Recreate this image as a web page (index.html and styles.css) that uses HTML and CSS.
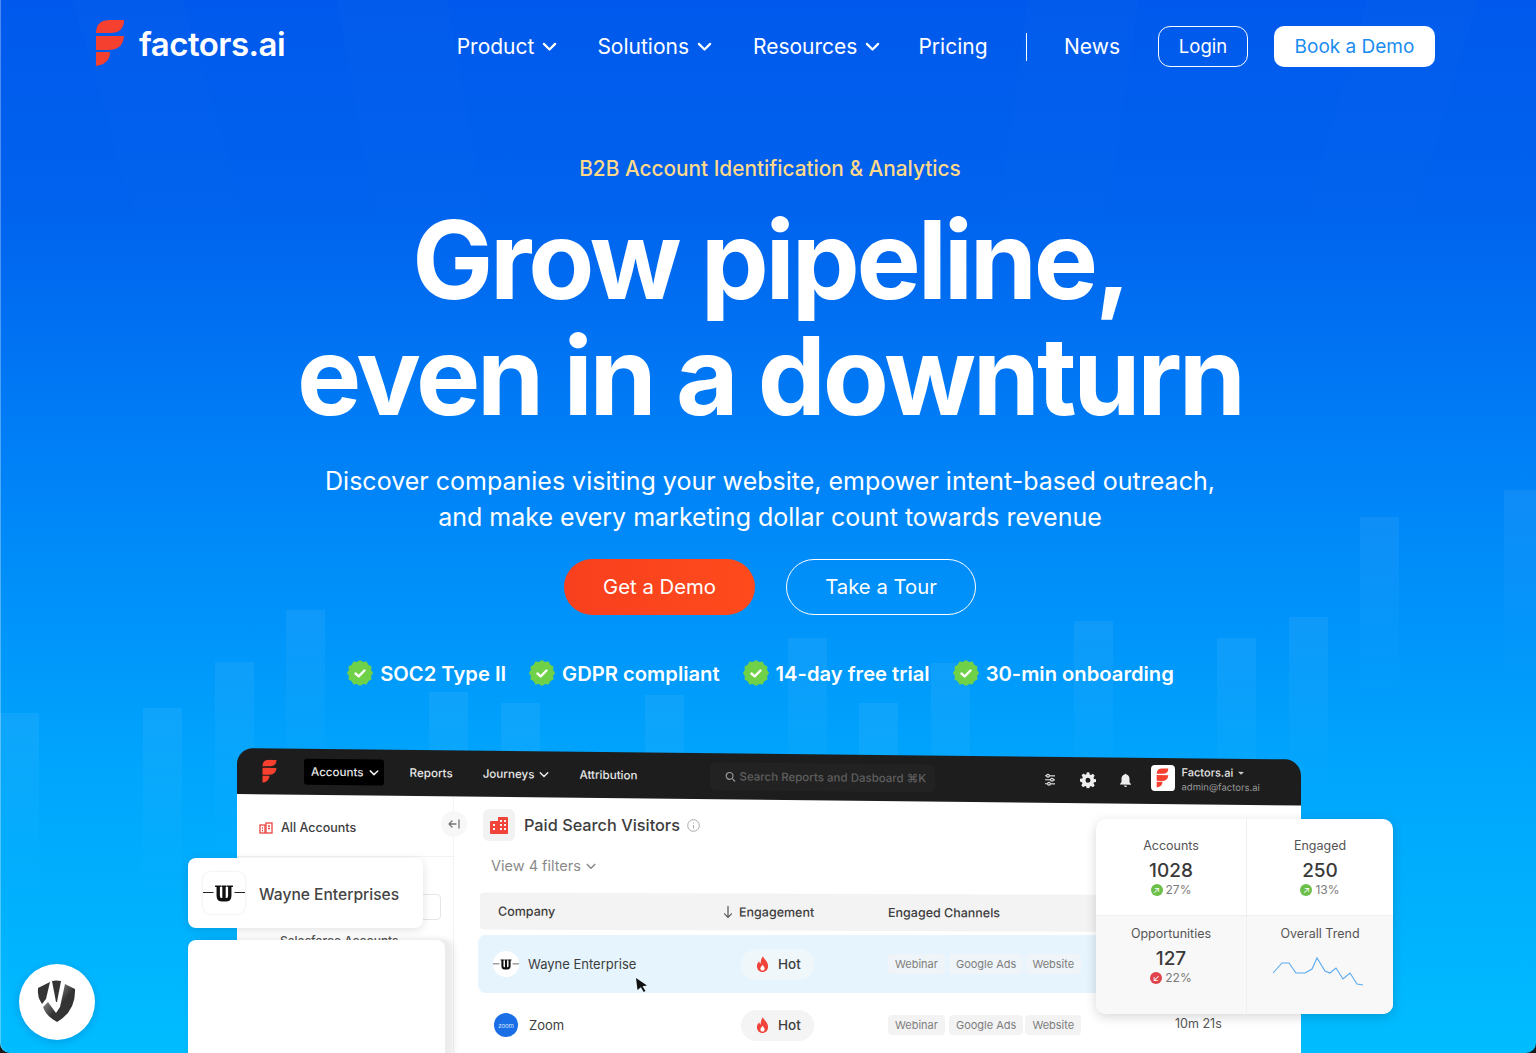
FILE: index.html
```html
<!DOCTYPE html>
<html lang="en">
<head>
    <meta charset="UTF-8">
    <meta name="viewport" content="width=device-width, initial-scale=1.0">
    <title>Factors.ai</title>
    <link rel="stylesheet" href="styles.css">
</head>
<body>

    <svg class="sprites" width="0" height="0">
        <symbol id="mark" viewBox="95 19 30 48">
            <path d="M96 33Q96 20 110 20H124Q124 33 110 33Z"/>
            <path d="M96 36H124Q123 50 108 50H96Z"/>
            <path d="M96 52H110Q110 64 96 66Z"/>
        </symbol>
        <symbol id="check" viewBox="0 0 26 26">
            <path fill="#6fd147" d="M13 0l3 2 3.6-.4 1.7 3.1 3.2 1.7-.4 3.6 2 3-2 3 .4 3.6-3.200 1.700-1.700 3.100-3.600-.4-3 2-3-2-3.600.4-1.700-3.100-3.200-1.700.4-3.600-2-3 2-3-.4-3.600 3.200-1.700 1.700-3.100 3.600.4z"/>
            <path fill="none" stroke="#fff" stroke-width="2.400" stroke-linecap="round" stroke-linejoin="round" d="M8.500 13.500l3.200 2.800 5.800-5.800"/>
        </symbol>
        <symbol id="flame" viewBox="0 0 14 18">
            <path fill="#f0433a" d="M7.500 0c.6 3 5.500 5.200 5.500 10.500C13 14.500 10.300 17 7 17s-6-2.500-6-6.200c0-2.600 1.400-4 2.400-5.300.3 1.300.8 2 1.600 2.500C5 5 5.800 2 7.500 0z"/>
            <path fill="#fff" d="M7 9c.3 1.500 2.300 2.200 2.300 4.300C9.300 14.700 8.300 15.500 7 15.500s-2.300-.9-2.300-2.200C4.700 11.500 6.500 11 7 9z"/>
        </symbol>
        <symbol id="wayne" viewBox="0 0 40 20">
            <path fill="none" stroke="#222" stroke-width="1" d="M0 9h10M30 9h10"/>
            <path fill="none" stroke="#111" stroke-width="3.200" d="M14.500 3v9q0 4 3 4h5q3 0 3-4V3M20 3v13"/>
            <path fill="none" stroke="#111" stroke-width="1.400" d="M11.500 3h5.500M17.500 3h5M23 3h5.500"/>
        </symbol>
        <symbol id="chev" viewBox="0 0 12 8">
            <path fill="none" stroke="currentColor" stroke-width="1.800" stroke-linecap="round" stroke-linejoin="round" d="M1.500 1.500L6 6l4.500-4.500"/>
        </symbol>
    </svg>

    <div class="hero">
        <div class="rays">
            <span class="ray"></span><span class="ray"></span><span class="ray"></span><span class="ray"></span>
        </div>
        <div class="bars">
            <span class="bar"></span><span class="bar"></span><span class="bar"></span><span class="bar"></span>
            <span class="bar"></span><span class="bar"></span><span class="bar"></span><span class="bar"></span>
            <span class="bar"></span><span class="bar"></span><span class="bar"></span><span class="bar"></span>
            <span class="bar"></span><span class="bar"></span><span class="bar"></span>
        </div>

        <nav class="nav">
            <a class="brand">
                <svg class="brand-mark"><use href="#mark"/></svg>
                <span class="brand-name">factors.ai</span>
            </a>
            <div class="nav-links">
                <a class="nav-link">Product <svg class="nav-chev"><use href="#chev"/></svg></a>
                <a class="nav-link nav-solutions">Solutions <svg class="nav-chev"><use href="#chev"/></svg></a>
                <a class="nav-link">Resources <svg class="nav-chev"><use href="#chev"/></svg></a>
                <a class="nav-link nav-pricing">Pricing</a>
                <span class="nav-divider"></span>
                <a class="nav-link nav-news">News</a>
                <a class="btn-login">Login</a>
                <a class="btn-book">Book a Demo</a>
            </div>
        </nav>

        <div class="intro">
            <p class="eyebrow">B2B Account Identification &amp; Analytics</p>
            <h1>Grow pipeline,<br>even in a downturn</h1>
            <p class="lead">Discover companies visiting your website, empower intent-based outreach,<br>and make every marketing dollar count towards revenue</p>
            <div class="cta-row">
                <a class="cta cta-main">Get a Demo</a>
                <a class="cta cta-ghost">Take a Tour</a>
            </div>
            <ul class="perks">
                <li><svg class="perk-icon"><use href="#check"/></svg>SOC2 Type II</li>
                <li><svg class="perk-icon"><use href="#check"/></svg>GDPR compliant</li>
                <li><svg class="perk-icon"><use href="#check"/></svg>14-day free trial</li>
                <li><svg class="perk-icon"><use href="#check"/></svg>30-min onboarding</li>
            </ul>
        </div>

        <div class="app">
            <div class="app-bar">
                <svg class="app-mark"><use href="#mark"/></svg>
                <a class="app-tab active">Accounts <svg class="tab-chev"><use href="#chev"/></svg></a>
                <a class="app-tab">Reports</a>
                <a class="app-tab">Journeys <svg class="tab-chev"><use href="#chev"/></svg></a>
                <a class="app-tab">Attribution</a>
                <div class="app-search">
                    <svg width="11" height="11" viewBox="0 0 12 12" fill="none" stroke="#9a9a9a" stroke-width="1.300"><circle cx="5" cy="5" r="3.700"/><path d="M8 8l3 3"/></svg>
                    Search Reports and Dasboard ⌘K
                </div>
                <div class="app-tools">
                    <svg width="14" height="14" viewBox="0 0 14 14" stroke="#ddd" stroke-width="1.200" fill="#1d1d1d"><path d="M2 3h10M2 7h10M2 11h10"/><circle cx="5" cy="3" r="1.400"/><circle cx="9" cy="7" r="1.400"/><circle cx="6" cy="11" r="1.400"/></svg>
                    <svg width="16" height="16" viewBox="0 0 16 16"><path fill="#eee" fill-rule="evenodd" d="M6.700 0h2.600l.4 2.200 1.300.6 1.900-1.200 1.800 1.800-1.200 1.900.6 1.300 2.200.4v2.600l-2.200.4-.6 1.300 1.200 1.900-1.800 1.800-1.900-1.200-1.300.6-.4 2.200H6.700l-.4-2.200-1.300-.6-1.900 1.200-1.800-1.800 1.200-1.900-.6-1.300L0 9.300V6.700l2.200-.4.600-1.300-1.200-1.900 1.800-1.800 1.900 1.200 1.300-.6zM8 5.500a2.500 2.500 0 100 5 2.500 2.500 0 000-5z"/></svg>
                    <svg width="13" height="14" viewBox="0 0 13 14"><path fill="#eee" d="M6.500 0C6 0 5.700.4 5.700.9 3.700 1.300 2.500 3 2.500 5v3.500L1 10.500V11h11v-.5l-1.500-2V5c0-2-1.200-3.700-3.200-4.100C7.300.4 7 0 6.500 0zM5 12a1.500 1.500 0 003 0z"/></svg>
                </div>
                <div class="app-user">
                    <span class="user-tile"><svg class="tile-mark"><use href="#mark"/></svg></span>
                    <div class="user-text">
                        <span class="user-name">Factors.ai <i class="caret"></i></span>
                        <span class="user-mail">admin@factors.ai</span>
                    </div>
                </div>
            </div>

            <div class="app-body">
                <aside class="side">
                    <div class="side-item">
                        <svg width="14" height="12" viewBox="0 0 14 12" fill="none" stroke="#e8453f" stroke-width="1.300"><rect x="1" y="3" width="5" height="8"/><rect x="7" y="1" width="6" height="10"/><path d="M9 4h2M9 6.500h2M3 6h1M3 8.500h1"/></svg>
                        All Accounts
                    </div>
                    <span class="side-collapse">
                        <svg width="12" height="10" viewBox="0 0 12 10" fill="none" stroke="#777" stroke-width="1.300" stroke-linecap="round" stroke-linejoin="round"><path d="M8 5H1M4 2L1 5l3 3M11 1v8"/></svg>
                    </span>
                    <span class="side-rule"></span>
                    <span class="side-input"></span>
                    <div class="side-item side-sf">Salesforce Accounts</div>
                </aside>

                <section class="main">
                    <div class="title-row">
                        <span class="title-icon">
                            <svg width="18" height="17" viewBox="0 0 18 17"><path fill="#f0433a" fill-rule="evenodd" d="M8 0h9a1 1 0 011 1v15a1 1 0 01-1 1H1a1 1 0 01-1-1V5a1 1 0 011-1h7zM10 3v2h2V3zM14 3v2h2V3zM10 7v2h2V7zM14 7v2h2V7zM3 7v2h2V7zM3 11v2h2v-2zM10 11v2h2v-2zM14 11v2h2v-2z"/></svg>
                        </span>
                        <h2>Paid Search Visitors</h2>
                        <svg width="13" height="13" viewBox="0 0 13 13" fill="none" stroke="#aaa"><circle cx="6.500" cy="6.500" r="5.800"/><path d="M6.500 6v3.500M6.500 3.500v1"/></svg>
                    </div>
                    <div class="filters">View 4 filters <svg class="tab-chev"><use href="#chev"/></svg></div>

                    <div class="table-head">
                        <span>Company</span>
                        <span class="sort"><svg width="10" height="13" viewBox="0 0 10 13" fill="none" stroke="#555" stroke-width="1.200" stroke-linecap="round" stroke-linejoin="round"><path d="M5 1v11M1.500 8.500L5 12l3.500-3.500"/></svg>Engagement</span>
                        <span>Engaged Channels</span>
                    </div>
                    <div class="table-row selected">
                        <span class="company">
                            <span class="co-logo"><svg class="wayne-mini"><use href="#wayne"/></svg></span>
                            Wayne Enterprise
                            <svg class="cursor" width="12" height="14" viewBox="0 0 12 14"><path fill="#111" d="M0 0l11 7.500-4.500.8 3 4.700-1.800 1-2.800-4.800L1.500 12z"/></svg>
                        </span>
                        <span class="hot"><svg class="flame"><use href="#flame"/></svg>Hot</span>
                        <span class="tags"><em>Webinar</em><em>Google Ads</em><em>Website</em></span>
                    </div>
                    <div class="table-row">
                        <span class="company">
                            <span class="co-zoom">zoom</span>
                            Zoom
                        </span>
                        <span class="hot"><svg class="flame"><use href="#flame"/></svg>Hot</span>
                        <span class="tags tags-grey"><em>Webinar</em><em>Google Ads</em><em>Website</em></span>
                        <span class="duration">10m 21s</span>
                    </div>
                </section>
            </div>

            <div class="float-wayne">
                <span class="float-logo"><svg class="wayne-big"><use href="#wayne"/></svg></span>
                Wayne Enterprises
            </div>
            <div class="float-blank"></div>

            <div class="stats">
                <div class="stat">
                    <span class="stat-label">Accounts</span>
                    <b class="stat-num">1028</b>
                    <span class="stat-delta"><i class="dot up">↗</i>27%</span>
                </div>
                <div class="stat">
                    <span class="stat-label">Engaged</span>
                    <b class="stat-num">250</b>
                    <span class="stat-delta"><i class="dot up">↗</i>13%</span>
                </div>
                <div class="stat stat-low">
                    <span class="stat-label">Opportunities</span>
                    <b class="stat-num">127</b>
                    <span class="stat-delta"><i class="dot down">↙</i>22%</span>
                </div>
                <div class="stat stat-low">
                    <span class="stat-label">Overall Trend</span>
                    <svg class="spark" width="96" height="34" viewBox="0 0 96 34" fill="none" stroke="#5aa9ee" stroke-width="1.100"><polyline points="3,18 12,8 19,8 26,18 35,18 42,14 47,3 55,16 60,18 66,13 73,24 80,18 87,29 93,30"/></svg>
                </div>
            </div>
        </div>

        <div class="help-badge">
            <svg width="40" height="46" viewBox="0 0 40 46">
                <defs>
                    <linearGradient id="fade" x1="0" y1="0" x2="1" y2="1">
                        <stop offset="0" stop-color="#c9c9c9"/>
                        <stop offset=".55" stop-color="#333"/>
                    </linearGradient>
                </defs>
                <path fill="#333" d="M1 9l12-6-4 17-4 5Q0 18 1 9z"/>
                <path fill="#333" d="M15 2q4-1 9 0l-4 21h-1z"/>
                <path fill="url(#fade)" d="M28 5l10 5q1 22-18 33Q9 37 6 28l5-5 8 11 4-6z"/>
            </svg>
        </div>
    </div>

</body>
</html>
```

FILE: styles.css
```css
* {
    box-sizing: border-box;
}

html, body {
    margin: 0;
    background-color: #1a1a1a;
}

body {
    font-family: 'Inter', 'Liberation Sans', sans-serif;
    color: #fff;
}

.sprites {
    position: absolute;
}

.hero {
    position: relative;
    height: 1053px;
    overflow: hidden;
    border-radius: 0 0 10px 10px;
    background: linear-gradient(180deg, #0059ec 0%, #0063ee 20%, #0086f8 48%, #00a4fc 72%, #00bdff 100%);
    box-shadow: inset 1px 0 0 rgba(255, 255, 255, 0.3);
}

/* background decoration */
.rays {
    position: absolute;
    top: 0;
    left: 0;
    right: 0;
    height: 300px;
}

.ray {
    position: absolute;
    top: -20px;
    width: 110px;
    height: 300px;
    background: linear-gradient(180deg, rgba(255, 255, 255, 0.012), rgba(255, 255, 255, 0));
}

.ray:nth-child(1) { left: 110px; transform: skewX(16deg); }
.ray:nth-child(2) { left: 360px; transform: skewX(10deg); }
.ray:nth-child(3) { left: 1010px; transform: skewX(-8deg); }
.ray:nth-child(4) { left: 1330px; transform: skewX(-16deg); }

.bars {
    position: absolute;
    top: 0;
    left: 0;
    right: 0;
    bottom: 0;
}

.bar {
    position: absolute;
    width: 39px;
    height: 190px;
    background: linear-gradient(180deg, rgba(255, 255, 255, 0.06), rgba(255, 255, 255, 0.015) 70%, rgba(255, 255, 255, 0));
}

.bar:nth-child(1) { left: 0; top: 713px; }
.bar:nth-child(2) { left: 143px; top: 708px; }
.bar:nth-child(3) { left: 215px; top: 662px; }
.bar:nth-child(4) { left: 286px; top: 610px; }
.bar:nth-child(5) { left: 429px; top: 692px; }
.bar:nth-child(6) { left: 501px; top: 703px; }
.bar:nth-child(7) { left: 645px; top: 695px; }
.bar:nth-child(8) { left: 788px; top: 638px; }
.bar:nth-child(9) { left: 859px; top: 703px; }
.bar:nth-child(10) { left: 931px; top: 663px; }
.bar:nth-child(11) { left: 1074px; top: 621px; }
.bar:nth-child(12) { left: 1217px; top: 638px; }
.bar:nth-child(13) { left: 1289px; top: 617px; }
.bar:nth-child(14) { left: 1360px; top: 517px; }
.bar:nth-child(15) { left: 1504px; top: 490px; }

/* top nav */
.nav {
    position: relative;
    display: flex;
    justify-content: space-between;
    align-items: center;
    height: 41px;
    padding: 0 101px 0 95px;
    top: 26px;
}

.brand {
    display: flex;
    align-items: center;
    gap: 14px;
    margin-bottom: 8px;
}

.brand-mark {
    width: 30px;
    height: 48px;
    fill: #f5402f;
}

.brand-name {
    margin-top: 3px;
    font-size: 33px;
    font-weight: 600;
    letter-spacing: -0.5px;
}

.nav-links {
    display: flex;
    align-items: center;
    gap: 40px;
    font-size: 21px;
}

.nav-link {
    display: flex;
    align-items: center;
    gap: 8px;
}

.nav-solutions {
    margin-right: 1px;
}

.nav-pricing {
    margin-left: -2px;
    margin-right: -2px;
}

.nav-chev {
    width: 15px;
    height: 10px;
}

.nav-divider {
    width: 1.5px;
    height: 28px;
    background-color: #fff;
}

.nav-news {
    margin-left: -3px;
}

.btn-login {
    width: 90px;
    height: 41px;
    margin-left: -2px;
    line-height: 39px;
    border: 1.5px solid #fff;
    border-radius: 12px;
    font-size: 18.5px;
    text-align: center;
}

.btn-book {
    width: 161px;
    height: 41px;
    margin-left: -14px;
    line-height: 41px;
    background-color: #fff;
    border-radius: 10px;
    color: #1a8cf0;
    font-size: 19px;
    text-align: center;
}

/* hero text */
.intro {
    position: relative;
    margin-top: 114px;
    padding-left: 4px;
    text-align: center;
}

.eyebrow {
    margin: 0;
    color: #ffd98a;
    font-size: 20.8px;
    font-weight: 500;
    line-height: 28px;
}

h1 {
    margin: 19px 0 0;
    font-size: 108px;
    font-weight: 700;
    line-height: 116px;
    letter-spacing: -3.2px;
}

.lead {
    margin: 29px 0 0;
    font-size: 25px;
    font-weight: 400;
    line-height: 36px;
}

.cta-row {
    display: flex;
    justify-content: center;
    gap: 31px;
    margin-top: 24px;
}

.cta {
    width: 190px;
    height: 56px;
    line-height: 56px;
    border-radius: 28px;
    font-size: 20.3px;
}

.cta-main {
    background: linear-gradient(90deg, #f8401e, #ff4a1c);
    width: 191px;
}

.cta-ghost {
    line-height: 53px;
    border: 1.5px solid #fff;
}

.perks {
    display: flex;
    justify-content: center;
    gap: 23px;
    margin: 45px 0 0 -19px;
    padding: 0;
    list-style: none;
    font-size: 20.2px;
    font-weight: 600;
}

.perks li {
    display: flex;
    align-items: center;
    gap: 7px;
}

.perk-icon {
    width: 26px;
    height: 26px;
}

/* product mockup */
.app {
    position: relative;
    width: 1064px;
    margin: 62px 0 0 237px;
    color: #3d3d3d;
    font-size: 12.5px;
}

.app-bar {
    position: relative;
    z-index: 1;
    display: flex;
    align-items: center;
    height: 46px;
    padding-left: 25px;
    background-color: #1d1d1d;
    border-radius: 16px 16px 0 0;
    color: #e8e8e8;
    font-size: 11.6px;
    font-weight: 500;
    transform: skewY(0.62deg);
    transform-origin: left top;
}

.app-mark {
    width: 15px;
    height: 24px;
    margin-right: 27px;
    fill: #f5402f;
}

.app-tab {
    display: flex;
    align-items: center;
    gap: 5px;
    margin-right: 30px;
}

.app-tab.active {
    height: 26px;
    margin-right: 26px;
    padding: 0 5px 0 7px;
    background-color: #000;
    border-radius: 3px;
}

.tab-chev {
    width: 10px;
    height: 7px;
}

.app-search {
    display: flex;
    align-items: center;
    gap: 4px;
    width: 225px;
    height: 28px;
    margin-left: 42px;
    padding-left: 15px;
    background-color: #222;
    border-radius: 6px;
    color: #5f5f5f;
    font-size: 11.5px;
}

.app-tools {
    display: flex;
    align-items: center;
    gap: 23px;
    margin-left: 108px;
}

.app-user {
    display: flex;
    align-items: center;
    gap: 7px;
    margin: -6px 0 0 19px;
}

.user-tile {
    display: flex;
    align-items: center;
    justify-content: center;
    width: 24px;
    height: 26px;
    background-color: #fff;
    border-radius: 4px;
}

.tile-mark {
    width: 13px;
    height: 20px;
    fill: #f5402f;
}

.user-text {
    display: flex;
    flex-direction: column;
    gap: 2px;
}

.user-name {
    font-size: 11px;
}

.caret {
    display: inline-block;
    margin-left: 2px;
    border: 3.5px solid transparent;
    border-top-color: #ccc;
    border-bottom: 0;
    vertical-align: 2px;
}

.user-mail {
    color: #9a9a9a;
    font-size: 9.5px;
    font-weight: 400;
}

.app-body {
    display: flex;
    height: 300px;
    background-color: #fff;
}

.side {
    position: relative;
    width: 217px;
    flex-shrink: 0;
    border-right: 1px solid #f3f3f3;
}

.side-item {
    display: flex;
    align-items: center;
    gap: 8px;
    position: absolute;
    left: 22px;
    top: 26px;
    font-weight: 500;
}

.side-collapse {
    position: absolute;
    left: 204px;
    top: 17px;
    display: flex;
    align-items: center;
    justify-content: center;
    width: 26px;
    height: 26px;
    background-color: #f7f7f7;
    border-radius: 50%;
}

.side-rule {
    position: absolute;
    left: 0;
    right: 0;
    top: 62px;
    height: 1px;
    background-color: #f2f2f2;
}

.side-input {
    position: absolute;
    left: 170px;
    width: 34px;
    top: 100px;
    height: 26px;
    border: 1px solid #e6e6e6;
    border-radius: 4px;
}

.side-sf {
    left: 43px;
    top: 139px;
    font-size: 12px;
    color: #555;
}

.main {
    flex: 1;
    padding: 15px 0 0 27px;
}

.title-row {
    display: flex;
    align-items: center;
    gap: 9px;
    padding-left: 2px;
}

.title-row h2 {
    margin: 0 -2px 0 0;
    color: #3d3d3d;
    font-size: 16.3px;
    font-weight: 500;
}

.title-icon {
    display: flex;
    align-items: center;
    justify-content: center;
    width: 32px;
    height: 32px;
    background-color: #f2f2f2;
    border-radius: 6px;
}

.filters {
    display: flex;
    align-items: center;
    gap: 5px;
    margin: 16px 0 19px 10px;
    color: #8a8a8a;
    font-size: 14.5px;
    line-height: 18px;
}

.table-head {
    display: grid;
    grid-template-columns: 225px 165px 1fr;
    align-items: center;
    height: 37px;
    margin-left: -1px;
    padding-left: 18px;
    background-color: #f3f3f3;
    border-radius: 4px;
    font-size: 12.5px;
    font-weight: 500;
    transform: skewY(0.2deg);
}

.sort {
    display: flex;
    align-items: center;
    gap: 6px;
}

.table-row {
    display: grid;
    grid-template-columns: 225px 170px 287px auto;
    align-items: center;
    height: 58px;
    margin: 4px 0 0 -3px;
    padding-left: 15px;
    border-radius: 8px;
}

.table-row.selected {
    background-color: #e6f4fd;
}

.table-row + .table-row {
    margin-top: 3px;
}

.company {
    position: relative;
    display: flex;
    align-items: center;
    gap: 9px;
    font-size: 13px;
}

.co-logo {
    display: flex;
    align-items: center;
    justify-content: center;
    width: 26px;
    height: 26px;
    background-color: #fff;
    border-radius: 50%;
}

.wayne-mini {
    width: 26px;
    height: 13px;
}

.co-zoom {
    display: flex;
    align-items: center;
    justify-content: center;
    width: 24px;
    height: 24px;
    margin: 0 2px 0 1px;
    background-color: #1a6fe6;
    border-radius: 50%;
    color: #d9e8ff;
    font-size: 6px;
}

.cursor {
    position: absolute;
    left: 143px;
    top: 27px;
}

.hot {
    display: flex;
    align-items: center;
    gap: 9px;
    justify-self: start;
    height: 31px;
    margin-left: 23px;
    padding: 0 13px 0 15px;
    background-color: #f0f7fb;
    border-radius: 16px;
    font-size: 13.5px;
    font-weight: 500;
}

.table-row:not(.selected) .hot {
    background-color: #f4f4f4;
}

.flame {
    width: 13px;
    height: 17px;
}

.tags {
    display: flex;
    gap: 4px;
    font-size: 11px;
    color: #7d7d7d;
}

.tags em {
    padding: 3px 7px;
    background-color: #eef4f8;
    border-radius: 4px;
    font-style: normal;
}

.tags em:last-child {
    margin-left: -2px;
}

.tags-grey em {
    background-color: #f3f3f3;
}

.duration {
    margin-top: -4px;
    color: #555;
    font-size: 12.5px;
}

/* floating cards */
.float-wayne {
    position: absolute;
    z-index: 2;
    left: -49px;
    top: 110px;
    display: flex;
    align-items: center;
    gap: 14px;
    width: 235px;
    height: 70px;
    padding: 3px 0 0 15px;
    background-color: #fff;
    border-radius: 8px;
    box-shadow: 0 2px 10px rgba(0, 0, 0, 0.12);
    font-size: 15.6px;
    font-weight: 500;
    color: #444;
}

.float-logo {
    display: flex;
    align-items: center;
    justify-content: center;
    width: 42px;
    height: 42px;
    margin-top: -3px;
    border-radius: 8px;
    box-shadow: 0 0 3px rgba(0, 0, 0, 0.1);
}

.wayne-big {
    width: 42px;
    height: 21px;
}

.float-blank {
    position: absolute;
    z-index: 2;
    left: -49px;
    top: 192px;
    width: 257px;
    height: 130px;
    background-color: #fff;
    border-radius: 8px 8px 0 0;
    box-shadow: 5px 0 0 #ececec, 9px 0 6px rgba(0, 0, 0, 0.08), 0 -1px 6px rgba(0, 0, 0, 0.06);
}

.stats {
    position: absolute;
    z-index: 2;
    left: 859px;
    top: 71px;
    display: grid;
    grid-template-columns: 151px 146px;
    grid-template-rows: 96px 99px;
    width: 297px;
    height: 195px;
    overflow: hidden;
    background-color: #fff;
    border-radius: 10px;
    box-shadow: 0 3px 12px rgba(0, 0, 0, 0.16);
}

.stat {
    display: flex;
    flex-direction: column;
    align-items: center;
    padding-top: 19px;
}

.stat:nth-child(odd) {
    border-right: 1px solid #f0f0f0;
}

.stat-low {
    padding-top: 10px;
    background-color: #f8f8f8;
    border-top: 1px solid #efefef;
}

.stat-label {
    font-size: 12.5px;
    line-height: 16px;
    color: #555;
}

.stat-num {
    margin-top: 5px;
    font-size: 19px;
    font-weight: 500;
    line-height: 23px;
    color: #3a3a3a;
}

.stat-delta {
    display: flex;
    align-items: center;
    gap: 3px;
    font-size: 12px;
    color: #7a7a7a;
}

.dot {
    display: inline-block;
    width: 12px;
    height: 12px;
    border-radius: 50%;
    color: #fff;
    font-size: 9px;
    font-style: normal;
    line-height: 12px;
    text-align: center;
}

.dot.up {
    background-color: #6cc04a;
}

.dot.down {
    background-color: #e0434b;
}

.spark {
    margin: 13px 4px 0 0;
}

/* bottom left badge */
.help-badge {
    position: absolute;
    left: 19px;
    top: 964px;
    z-index: 3;
    display: flex;
    align-items: center;
    justify-content: center;
    width: 76px;
    height: 76px;
    background-color: #fff;
    border-radius: 50%;
    box-shadow: 0 2px 8px rgba(0, 40, 120, 0.2);
}
```
